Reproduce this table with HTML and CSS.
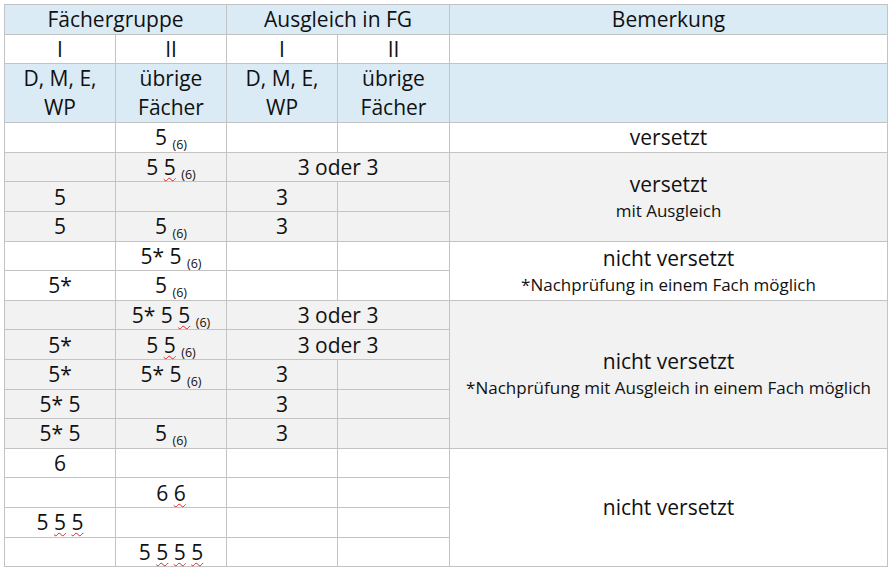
FILE: index.html
```html
<!DOCTYPE html>
<html lang="de">
<head>
<meta charset="utf-8">
<link rel="stylesheet" href="styles.css">
</head>
<body>
<table class="grid">
  <colgroup>
    <col class="c1"><col class="c2"><col class="c3"><col class="c4"><col class="c5">
  </colgroup>
  <thead>
    <tr class="hd">
      <th colspan="2">Fächergruppe</th>
      <th colspan="2">Ausgleich in FG</th>
      <th>Bemerkung</th>
    </tr>
    <tr class="hd2">
      <th>I</th><th>II</th><th>I</th><th>II</th><th></th>
    </tr>
    <tr class="hd hd3">
      <th>D, M, E,<br>WP</th>
      <th>übrige<br>Fächer</th>
      <th>D, M, E,<br>WP</th>
      <th>übrige<br>Fächer</th>
      <th></th>
    </tr>
  </thead>
  <tbody>
    <tr>
      <td></td><td>5 <span class="sub">(6)</span></td><td></td><td></td>
      <td class="note">versetzt</td>
    </tr>
    <tr class="gray">
      <td></td><td>5 <span class="sq">5</span> <span class="sub">(6)</span></td><td colspan="2">3 oder 3</td>
      <td rowspan="3" class="note">versetzt<span class="small">mit Ausgleich</span></td>
    </tr>
    <tr class="gray">
      <td>5</td><td></td><td>3</td><td></td>
    </tr>
    <tr class="gray">
      <td>5</td><td>5 <span class="sub">(6)</span></td><td>3</td><td></td>
    </tr>
    <tr>
      <td></td><td>5* 5 <span class="sub">(6)</span></td><td></td><td></td>
      <td rowspan="2" class="note">nicht versetzt<span class="small">*Nachprüfung in einem Fach möglich</span></td>
    </tr>
    <tr>
      <td>5*</td><td>5 <span class="sub">(6)</span></td><td></td><td></td>
    </tr>
    <tr class="gray">
      <td></td><td>5* 5 <span class="sq">5</span> <span class="sub">(6)</span></td><td colspan="2">3 oder 3</td>
      <td rowspan="5" class="note">nicht versetzt<span class="small">*Nachprüfung mit Ausgleich in einem Fach möglich</span></td>
    </tr>
    <tr class="gray">
      <td>5*</td><td>5 <span class="sq">5</span> <span class="sub">(6)</span></td><td colspan="2">3 oder 3</td>
    </tr>
    <tr class="gray">
      <td>5*</td><td>5* 5 <span class="sub">(6)</span></td><td>3</td><td></td>
    </tr>
    <tr class="gray">
      <td>5* 5</td><td></td><td>3</td><td></td>
    </tr>
    <tr class="gray">
      <td>5* 5</td><td>5 <span class="sub">(6)</span></td><td>3</td><td></td>
    </tr>
    <tr>
      <td>6</td><td></td><td></td><td></td>
      <td rowspan="4" class="note">nicht versetzt</td>
    </tr>
    <tr>
      <td></td><td>6 <span class="sq">6</span></td><td></td><td></td>
    </tr>
    <tr>
      <td>5 <span class="sq">5</span> <span class="sq">5</span></td><td></td><td></td><td></td>
    </tr>
    <tr>
      <td></td><td>5 <span class="sq">5</span> <span class="sq">5</span> <span class="sq">5</span></td><td></td><td></td>
    </tr>
  </tbody>
</table>
</body>
</html>
```

FILE: styles.css
```css
html, body {
  margin: 0;
  padding: 0;
  background: #ffffff;
}

body {
  padding: 4px 0 0 4px;
  font-family: "Open Sans", "Noto Sans", sans-serif;
  color: #111111;
}

.grid {
  border-collapse: collapse;
  table-layout: fixed;
  width: 883px;
  font-size: 21px;
}

.c1 { width: 111px; }
.c2 { width: 111px; }
.c3 { width: 111px; }
.c4 { width: 112px; }
.c5 { width: 438px; }

.grid th,
.grid td {
  border: 1px solid #c3c3c3;
  padding: 0;
  text-align: center;
  vertical-align: middle;
  font-weight: normal;
  line-height: 28px;
}

.grid tr {
  height: 29.6px;
}

.hd th {
  background: #daebf5;
}

.hd3 th {
  line-height: 29px;
}

.gray td {
  background: #f2f2f2;
}

.note {
  background: #ffffff;
}

.gray .note {
  background: #f2f2f2;
}

.small {
  display: block;
  font-size: 17px;
  line-height: 26px;
}

.sub {
  font-size: 12.5px;
  vertical-align: -4px;
  line-height: 0;
}

.sq {
  text-decoration-line: underline;
  text-decoration-style: wavy;
  text-decoration-color: #d42a2a;
  text-decoration-thickness: 1px;
  text-underline-offset: 2px;
}
```
